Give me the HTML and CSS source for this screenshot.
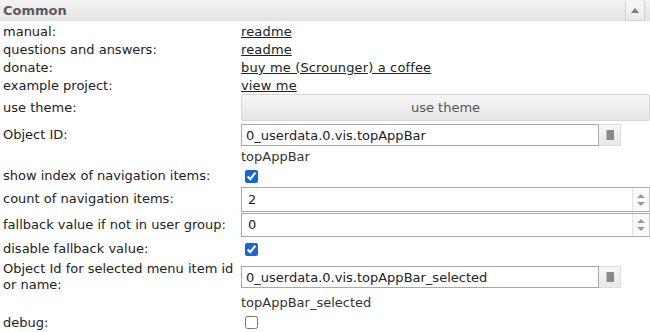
FILE: index.html
```html
<!DOCTYPE html>
<html lang="en">
<head>
    <meta charset="UTF-8">
    <title>Common</title>
    <link rel="stylesheet" href="styles.css">
</head>
<body>

<div class="panel">
    <div class="head">
        <span class="title">Common</span>
        <button class="collapse"><svg width="8" height="5" viewBox="0 0 8 5"><path d="M0 5 L4 0 L8 5 Z" fill="#7a7a7a"/></svg></button>
    </div>

    <div class="row link">
        <div class="label">manual:</div>
        <div class="value"><a href="#">readme</a></div>
    </div>
    <div class="row link">
        <div class="label">questions and answers:</div>
        <div class="value"><a href="#">readme</a></div>
    </div>
    <div class="row link">
        <div class="label">donate:</div>
        <div class="value"><a href="#">buy me (Scrounger) a coffee</a></div>
    </div>
    <div class="row link">
        <div class="label">example project:</div>
        <div class="value"><a href="#">view me</a></div>
    </div>

    <div class="row theme">
        <div class="label">use theme:</div>
        <div class="value"><button class="wide-btn">use theme</button></div>
    </div>

    <div class="row oid">
        <div class="label">Object ID:</div>
        <div class="value">
            <div class="oid-field">
                <input type="text" value="0_userdata.0.vis.topAppBar">
                <button class="pick"><svg width="8" height="10" viewBox="0 0 8 10"><rect x="1" y="0" width="7" height="10" fill="#8a8a8a"/><path d="M0 1h1M0 3h1M0 5h1M0 7h1M0 9h1" stroke="#8a8a8a" stroke-width="1"/></svg></button>
            </div>
        </div>
    </div>
    <div class="row note">
        <div class="label"></div>
        <div class="value hint">topAppBar</div>
    </div>

    <div class="row check">
        <div class="label">show index of navigation items:</div>
        <div class="value"><input type="checkbox" checked></div>
    </div>

    <div class="row count">
        <div class="label">count of navigation items:</div>
        <div class="value">
            <div class="num-field">
                <input type="text" value="2">
                <span class="spin"><i class="up"></i><i class="down"></i></span>
            </div>
        </div>
    </div>
    <div class="row fallback">
        <div class="label">fallback value if not in user group:</div>
        <div class="value">
            <div class="num-field">
                <input type="text" value="0">
                <span class="spin"><i class="up"></i><i class="down"></i></span>
            </div>
        </div>
    </div>

    <div class="row check tall">
        <div class="label">disable fallback value:</div>
        <div class="value"><input type="checkbox" checked></div>
    </div>

    <div class="row oid two">
        <div class="label">Object Id for selected menu item id or name:</div>
        <div class="value">
            <div class="oid-field">
                <input type="text" value="0_userdata.0.vis.topAppBar_selected">
                <button class="pick"><svg width="8" height="10" viewBox="0 0 8 10"><rect x="1" y="0" width="7" height="10" fill="#8a8a8a"/><path d="M0 1h1M0 3h1M0 5h1M0 7h1M0 9h1" stroke="#8a8a8a" stroke-width="1"/></svg></button>
            </div>
        </div>
    </div>
    <div class="row note low">
        <div class="label"></div>
        <div class="value hint">topAppBar_selected</div>
    </div>

    <div class="row check last">
        <div class="label">debug:</div>
        <div class="value"><input type="checkbox"></div>
    </div>
</div>

</body>
</html>
```

FILE: styles.css
```css
body {
    margin: 0;
    background: #fff;
    color: #222;
    font-family: "DejaVu Sans", Verdana, sans-serif;
    font-size: 13px;
}

.panel {
    width: 650px;
}

.head {
    display: flex;
    align-items: center;
    justify-content: space-between;
    height: 21px;
    margin-bottom: 1px;
    background: linear-gradient(#f2f2f2, #e4e4e4);
}

.title {
    padding-left: 3px;
    font-weight: bold;
    color: #5b5b5b;
}

.collapse {
    width: 20px;
    height: 20px;
    margin-right: 5px;
    padding: 0;
    border: 1px solid #d0d0d0;
    border-top: none;
    border-radius: 0 0 2px 2px;
    background: linear-gradient(#f7f7f7, #eaeaea);
    display: flex;
    align-items: center;
    justify-content: center;
}

.row {
    display: grid;
    grid-template-columns: 241px 1fr;
    align-items: center;
}

.label {
    padding-left: 3px;
    line-height: 16px;
}

.row.link {
    height: 18px;
    padding-top: 1px;
    box-sizing: border-box;
}

a {
    color: #222;
    text-decoration: underline;
    letter-spacing: 0.15px;
}

.row.theme {
    height: 27px;
}

.wide-btn {
    display: block;
    width: 100%;
    height: 27px;
    border: 1px solid #d6d6d6;
    border-radius: 2px;
    background: linear-gradient(#f6f6f6, #e6e6e6);
    color: #555;
    font-family: inherit;
    font-size: 13px;
}

.row.oid {
    height: 22px;
    margin-top: 3px;
}

.row.two {
    height: 30px;
    margin-top: 0;
}

.oid-field {
    display: flex;
    height: 22px;
}

.oid-field input {
    width: 358px;
    box-sizing: border-box;
    height: 22px;
    margin: 0;
    padding: 0 4px;
    border: 1px solid #a7a7b0;
    border-radius: 0;
    font-family: inherit;
    font-size: 13px;
    color: #222;
}

.pick {
    width: 22px;
    height: 22px;
    padding: 0;
    border: 1px solid #dcdcdc;
    border-left: none;
    background: linear-gradient(#f6f6f6, #e8e8e8);
    display: flex;
    align-items: center;
    justify-content: center;
}

.row.note { height: 20px; }
.row.note.low { height: 22px; }

.hint {
    color: #333;
}

.row.check { height: 20px; }
.row.check.tall { height: 24px; }
.row.check.last { height: 19px; }

input[type="checkbox"] {
    width: 13px;
    height: 13px;
    margin: 0 0 0 4px;
    accent-color: #1766d6;
    display: block;
}

.row.count { height: 26px; }
.row.fallback { height: 25px; }

.num-field {
    display: flex;
    height: 25px;
    box-sizing: border-box;
    border: 1px solid #a7a7b0;
    border-right-color: #c8c8c8;
}

.row.count .num-field { margin-top: 1px; }
.row.fallback .num-field { height: 24px; }

.num-field input {
    flex: 1;
    min-width: 0;
    border: none;
    outline: none;
    padding: 0 6px;
    font-family: inherit;
    font-size: 13px;
    color: #222;
}

.spin {
    width: 16px;
    display: flex;
    flex-direction: column;
    justify-content: center;
    gap: 4px;
    align-items: center;
    background: #fafafa;
    border-left: 1px solid #e2e2e2;
}

.spin i {
    display: block;
    width: 0;
    height: 0;
    border-left: 4px solid transparent;
    border-right: 4px solid transparent;
}

.spin .up { border-bottom: 4px solid #9a9a9a; }
.spin .down { border-top: 4px solid #9a9a9a; }
```
